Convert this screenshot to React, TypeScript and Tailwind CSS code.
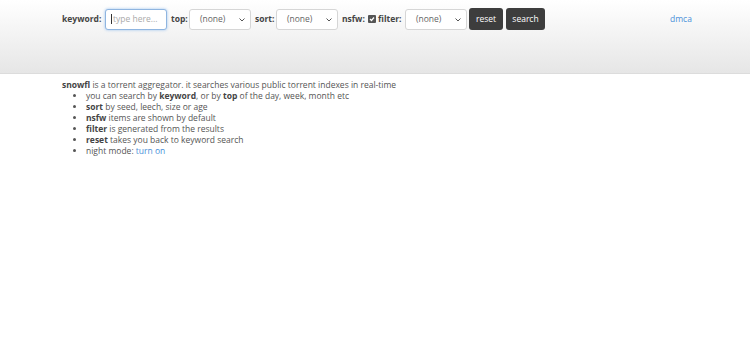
import React from "react";

function Select() {
  return (
    <div className="relative h-[21px] w-[62px] bg-white border border-[#d6d6d6] rounded-[3px] flex items-center pl-[10px] text-[#666]">
      <span>(none)</span>
      <svg className="absolute right-[5px] top-[8px]" width="6" height="4" viewBox="0 0 6 4">
        <path d="M0.5 0.5 L3 3 L5.5 0.5" fill="none" stroke="#555" strokeWidth="1" />
      </svg>
    </div>
  );
}

export default function App() {
  return (
    <div className="w-[750px] h-[343px] bg-white text-[8.5px] text-[#555]" style={{ fontFamily: '"Open Sans", "DejaVu Sans", sans-serif' }}>
      <div className="h-[74px] bg-gradient-to-b from-white to-[#e6e6e6] border-b border-[#dcdcdc] relative">
        <div className="flex items-center pl-[62px] pt-[8px] h-[30px]">
          <span className="font-bold text-[#444] w-[43px]">keyword:</span>
          <div className="h-[21px] w-[62px] bg-white border border-[#8fb5e0] rounded-[3px] shadow-[0_0_3px_#9cc3ef] flex items-center pl-[5px] text-[#aaa]">
            <span className="w-px h-[10px] bg-[#333] mr-[1px]"></span>
            <span>type here...</span>
          </div>
          <span className="font-bold text-[#444] ml-[4px] w-[18px]">top:</span>
          <Select />
          <span className="font-bold text-[#444] ml-[4px] w-[21px]">sort:</span>
          <Select />
          <span className="font-bold text-[#444] ml-[4px] w-[26px]">nsfw:</span>
          <span className="w-[8px] h-[8px] bg-[#555] rounded-[1px] flex items-center justify-center mr-[2px]">
            <svg width="6" height="6" viewBox="0 0 6 6">
              <path d="M1 3 L2.5 4.5 L5 1.5" fill="none" stroke="white" strokeWidth="1.2" />
            </svg>
          </span>
          <span className="font-bold text-[#444] w-[27px]">filter:</span>
          <Select />
          <div className="ml-[2px] h-[22px] w-[34px] bg-[#3d3d3d] rounded-[3px] text-white flex items-center justify-center">reset</div>
          <div className="ml-[3px] h-[22px] w-[39px] bg-[#3d3d3d] rounded-[3px] text-white flex items-center justify-center">search</div>
          <a className="ml-[125px] text-[#4a90d9]">dmca</a>
        </div>
      </div>
      <div className="pl-[62px] pt-[5px] leading-[11px]">
        <div><b className="text-[#444]">snowfl</b> is a torrent aggregator. it searches various public torrent indexes in real-time</div>
        <ul className="pl-[24px] list-disc">
          <li>you can search by <b className="text-[#444]">keyword</b>, or by <b className="text-[#444]">top</b> of the day, week, month etc</li>
          <li><b className="text-[#444]">sort</b> by seed, leech, size or age</li>
          <li><b className="text-[#444]">nsfw</b> items are shown by default</li>
          <li><b className="text-[#444]">filter</b> is generated from the results</li>
          <li><b className="text-[#444]">reset</b> takes you back to keyword search</li>
          <li>night mode: <a className="text-[#4a90d9]">turn on</a></li>
        </ul>
      </div>
    </div>
  );
}
